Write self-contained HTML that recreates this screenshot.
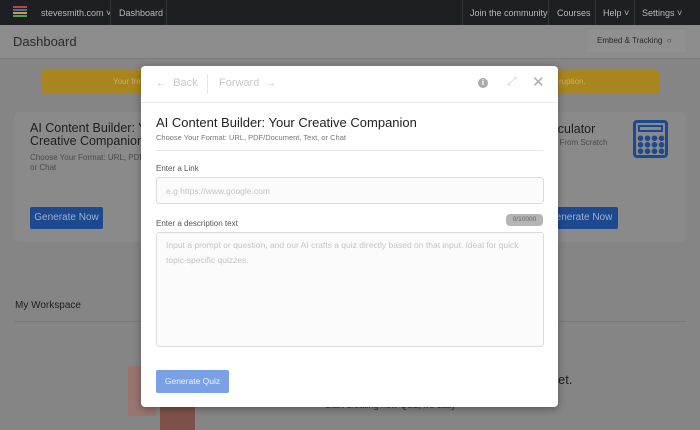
<!DOCTYPE html>
<html><head><style>
*{box-sizing:border-box;margin:0;padding:0}
body{width:700px;height:430px;overflow:hidden;position:relative;font-family:"Liberation Sans",sans-serif;background:#858585}
.nav{position:absolute;left:0;top:0;width:700px;height:25px;background:#1d1f22;color:#b9b9b9;font-size:9px}
.nav span{position:absolute;top:8px}
.sep{position:absolute;top:0;width:1px;height:25px;background:#33363a}
.hdr{position:absolute;top:25px;left:0;width:700px;height:34px;background:#8c8c8c;border-bottom:1px solid #7c7c7c}
.abs{position:absolute}
.card{position:absolute;background:#8a8a8a;border-radius:6px}
.btn{position:absolute;height:22px;background:#1d4a8f;color:#9bb0d0;font-size:10px;border-radius:2px;text-align:center;line-height:22px}
.modal{position:absolute;left:141px;top:66px;width:417px;height:341px;background:#fff;border-radius:4px;box-shadow:0 2px 8px rgba(0,0,0,.35)}
.lbl{position:absolute;font-size:8px;color:#555}
</style></head><body>
<div class="nav">
<div class="abs" style="left:13px;top:6px;width:14px;height:2px;background:#b04a4a"></div>
<div class="abs" style="left:13px;top:9px;width:14px;height:2px;background:#4a6ab0"></div>
<div class="abs" style="left:13px;top:12px;width:14px;height:2px;background:#c8a040"></div>
<div class="abs" style="left:13px;top:15px;width:14px;height:2px;background:#5aa050"></div>
<span style="left:41px">stevesmith.com ˅</span>
<div class="sep" style="left:110px"></div>
<span style="left:119px">Dashboard</span>
<div class="sep" style="left:166px"></div>
<div class="sep" style="left:462px"></div>
<span style="left:470px">Join the community</span>
<div class="sep" style="left:548px"></div>
<span style="left:557px">Courses</span>
<div class="sep" style="left:595px"></div>
<span style="left:603px">Help ˅</span>
<div class="sep" style="left:634px"></div>
<span style="left:642px">Settings ˅</span>
</div>
<div class="hdr">
<div class="abs" style="left:13px;top:9px;font-size:13px;color:#2a2a2a">Dashboard</div>
<div class="abs" style="left:587px;top:5px;width:99px;height:22px;background:#909090;border-radius:2px;font-size:8px;color:#2a2a2a;line-height:22px;padding-left:10px">Embed &amp; Tracking &nbsp;○</div>
</div>
<div class="abs" style="left:41px;top:70px;width:618px;height:24px;background:#a8851f;border-radius:3px;font-size:8px;color:#d0b060;line-height:24px;padding-left:72px">Your fre<span style="position:absolute;left:518px">ruption.</span></div>
<div class="card" style="left:14px;top:112px;width:300px;height:130px"></div>
<div class="card" style="left:390px;top:112px;width:296px;height:130px"></div>
<div class="abs" style="left:30px;top:122px;font-size:12.5px;color:#1e1e1e;line-height:13px">AI Content Builder: Your<br>Creative Companion</div>
<div class="abs" style="left:30px;top:153px;font-size:8px;color:#4a4a4a;line-height:10px">Choose Your Format: URL, PDF<br>or Chat</div>
<div class="btn" style="left:30px;top:207px;width:73px">Generate Now</div>
<div class="abs" style="left:555px;top:122px;font-size:12.5px;color:#1e1e1e">lculator</div>
<div class="abs" style="left:555px;top:138px;font-size:8px;color:#4a4a4a">t From Scratch</div>
<div class="btn" style="left:550px;top:207px;width:68px">enerate Now</div>
<div class="abs" style="left:633px;top:120px;width:35px;height:38px;border:3px solid #1d4a8f;border-radius:4px">
<div class="abs" style="left:2px;top:2px;width:25px;height:7px;border:2px solid #1d4a8f"></div>
<div class="abs" style="left:1px;top:12px;width:28px;height:20px;background:radial-gradient(circle,#1d4a8f 2.5px,transparent 3px) 0 0/7px 6.5px"></div>
</div>
<div class="abs" style="left:15px;top:300px;font-size:10px;color:#1e1e1e">My Workspace</div>
<div class="abs" style="left:14px;top:321px;width:672px;height:1px;background:#7a7a7a"></div>
<div class="abs" style="left:128px;top:366px;width:28px;height:50px;background:#9a7470"></div>
<div class="abs" style="left:160px;top:385px;width:35px;height:45px;background:#7e524a;border-radius:14px 14px 0 0"></div>
<div class="abs" style="left:558px;top:372px;font-size:13px;color:#1e1e1e">et.</div>
<div class="abs" style="left:325px;top:400px;font-size:9px;color:#2a2a2a">Start creating new Quiz, it's easy</div>

<div class="modal">
<div class="abs" style="left:15px;top:11px;font-size:11px;color:#c8c8c8"><b>←</b>&nbsp; Back</div>
<div class="abs" style="left:66px;top:8px;width:1px;height:20px;background:#e6e6e6"></div>
<div class="abs" style="left:78px;top:11px;font-size:11px;color:#c8c8c8">Forward&nbsp; <b>→</b></div>
<div class="abs" style="left:337px;top:12px;width:10px;height:10px;border-radius:50%;background:#aaa;color:#fff;font-size:8px;text-align:center;line-height:10px;font-weight:bold">i</div>
<div class="abs" style="left:366px;top:8px;font-size:12px;color:#d0d0d0">⤢</div>
<div class="abs" style="left:391px;top:7px;font-size:15px;color:#aaa">✕</div>
<div class="abs" style="left:0;top:36px;width:417px;height:1px;background:#e8e8e8"></div>
<div class="abs" style="left:15px;top:49px;font-size:13px;color:#222">AI Content Builder: Your Creative Companion</div>
<div class="abs" style="left:15px;top:67px;font-size:7.5px;color:#777">Choose Your Format: URL, PDF/Document, Text, or Chat</div>
<div class="abs" style="left:15px;top:84px;width:387px;height:1px;background:#e6e6e6"></div>
<div class="lbl" style="left:15px;top:98px">Enter a Link</div>
<div class="abs" style="left:15px;top:111px;width:388px;height:27px;border:1px solid #dcdcdc;border-radius:3px;background:#fbfbfb;font-size:8.5px;color:#c4c4c4;padding:8px 9px">e.g https://www.google.com</div>
<div class="lbl" style="left:15px;top:153px">Enter a description text</div>
<div class="abs" style="left:365px;top:148px;width:37px;height:12px;background:#b5b5b5;border-radius:4px;font-size:6.5px;color:#666;text-align:center;line-height:12px">0/10000</div>
<div class="abs" style="left:15px;top:166px;width:388px;height:115px;border:1px solid #dcdcdc;border-radius:3px;background:#fbfbfb;font-size:8.5px;color:#c4c4c4;padding:5px 9px;line-height:15px">Input a prompt or question, and our AI crafts a quiz directly based on that input. Ideal for quick topic-specific quizzes.</div>
<div class="abs" style="left:15px;top:304px;width:73px;height:23px;background:#7aa0e6;border-radius:2px;color:#eef3fc;font-size:8.5px;text-align:center;line-height:23px">Generate Quiz</div>
</div>
</body></html>
